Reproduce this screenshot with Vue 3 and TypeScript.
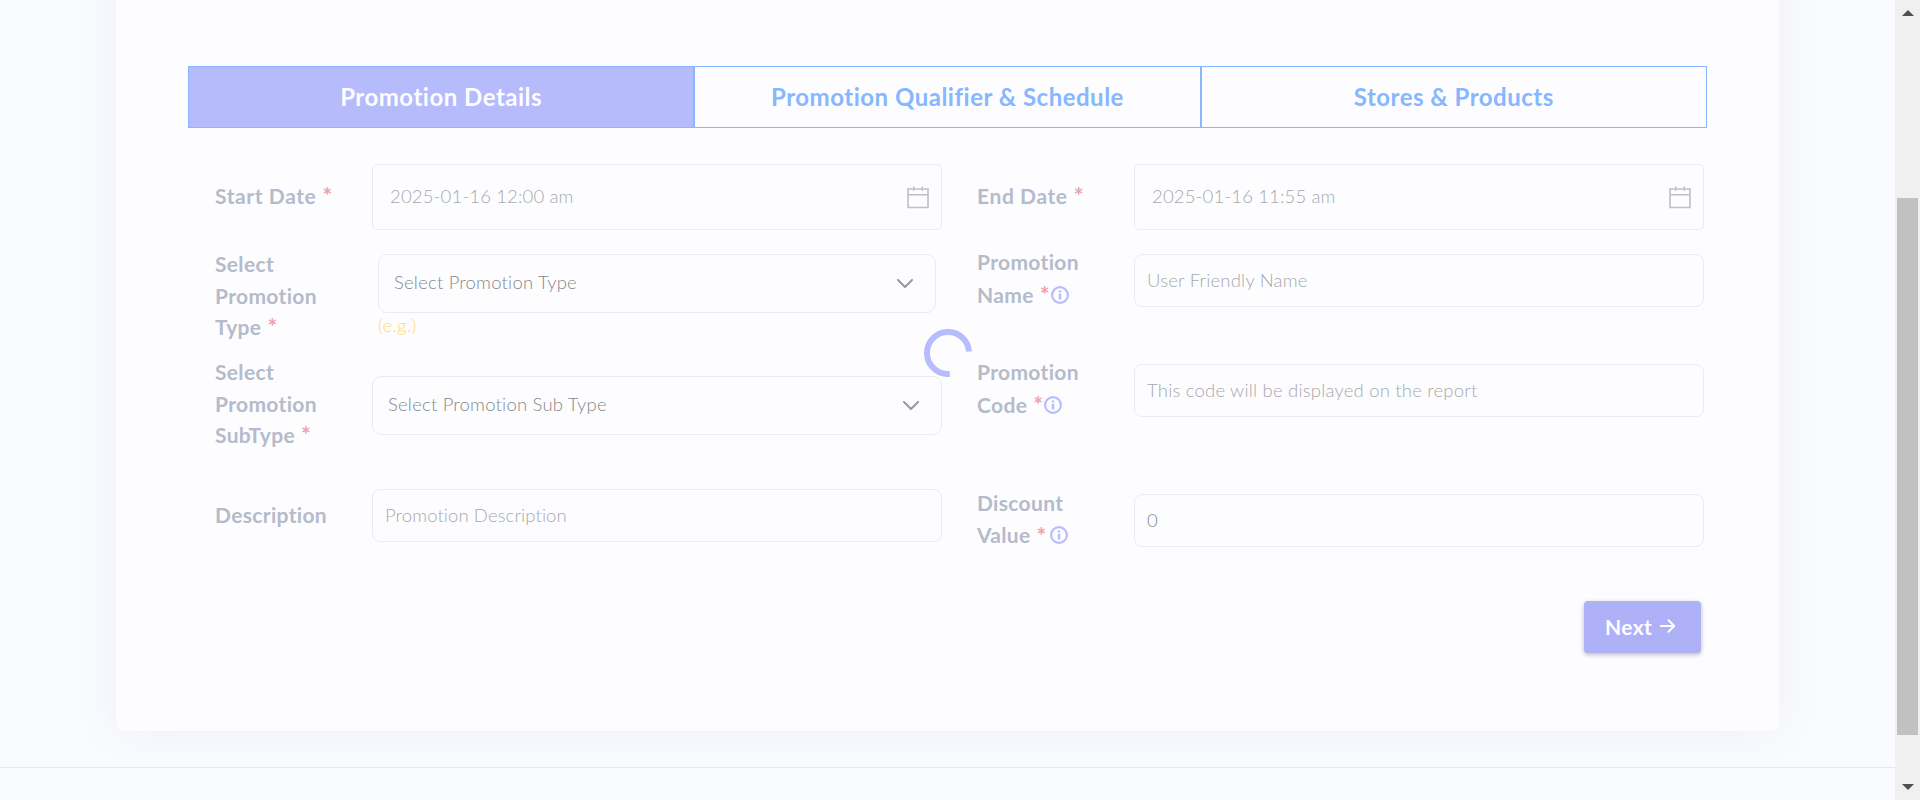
<script setup lang="ts">
interface Field {
  id: string
  kind: 'date' | 'select' | 'input'
  lines: string[]
  required?: boolean
  info?: boolean
  text: string
  hint?: string
  filled?: boolean
}

const tabs = [
  { id: 'details', label: 'Promotion Details', active: true },
  { id: 'qualifier', label: 'Promotion Qualifier & Schedule', active: false },
  { id: 'stores', label: 'Stores & Products', active: false },
]

const fields: Field[] = [
  { id: 'start', kind: 'date', lines: ['Start Date'], required: true, text: '2025-01-16 12:00 am' },
  { id: 'end', kind: 'date', lines: ['End Date'], required: true, text: '2025-01-16 11:55 am' },
  { id: 'type', kind: 'select', lines: ['Select', 'Promotion', 'Type'], required: true, text: 'Select Promotion Type', hint: '(e.g.)' },
  { id: 'name', kind: 'input', lines: ['Promotion', 'Name'], required: true, info: true, text: 'User Friendly Name' },
  { id: 'subtype', kind: 'select', lines: ['Select', 'Promotion', 'SubType'], required: true, text: 'Select Promotion Sub Type' },
  { id: 'code', kind: 'input', lines: ['Promotion', 'Code'], required: true, info: true, text: 'This code will be displayed on the report' },
  { id: 'description', kind: 'input', lines: ['Description'], text: 'Promotion Description' },
  { id: 'discount', kind: 'input', lines: ['Discount', 'Value'], required: true, info: true, text: '0', filled: true },
]
</script>

<template>
  <div class="window">
    <main class="page">
      <section class="card">
        <nav class="tabs">
          <div v-for="t in tabs" :key="t.id" class="tab" :class="[t.id, { active: t.active }]"><span>{{ t.label }}</span></div>
        </nav>
        <div class="form">
          <div v-for="f in fields" :key="f.id" class="field" :class="[f.id, f.kind]">
            <div class="label">
              <div v-for="(line, i) in f.lines" :key="line" class="line">
                <span>{{ line }}</span>
                <template v-if="i === f.lines.length - 1">
                  <span v-if="f.required" class="star">*</span>
                  <svg v-if="f.info" class="info" viewBox="0 0 18 18">
                    <circle cx="9" cy="9" r="7.900" fill="none" stroke="currentColor" stroke-width="2.200" />
                    <path d="M9 7.700v5.700M9 4.500v2.100" stroke="currentColor" stroke-width="2.500" />
                  </svg>
                </template>
              </div>
            </div>
            <div class="control">
              <div class="box" :class="{ filled: f.filled }">
                <span class="text">{{ f.text }}</span>
                <svg v-if="f.kind === 'date'" class="cal" viewBox="0 0 22 23">
                  <path d="M1 3h20v18.500H1zM1 8.700h20" fill="none" stroke="currentColor" stroke-width="1.600" />
                  <path d="M6.700 .6v4.400M15.300 .6v4.400" stroke="currentColor" stroke-width="1.400" />
                </svg>
                <svg v-if="f.kind === 'select'" class="chev" viewBox="0 0 16 10">
                  <path d="M1 1l7 7 7-7" fill="none" stroke="currentColor" stroke-width="2" stroke-linecap="round" stroke-linejoin="round" />
                </svg>
              </div>
              <div v-if="f.hint" class="hint">{{ f.hint }}</div>
            </div>
          </div>
        </div>
        <div class="actions">
          <div class="next">
            <span>Next</span>
            <svg viewBox="0 0 16 14"><path d="M1 7h13M8.500 1.300L14.200 7l-5.700 5.700" fill="none" stroke="currentColor" stroke-width="2.100" stroke-linecap="round" stroke-linejoin="round" /></svg>
          </div>
        </div>
      </section>
      <footer class="footer"></footer>
      <svg class="spinner" viewBox="0 0 48 48">
        <path d="M25.800 44.920A21 21 0 1 1 44.950 22.500" fill="none" stroke="#b7bcfd" stroke-width="6" />
      </svg>
    </main>
    <aside class="scrollbar">
      <svg class="arrow" viewBox="0 0 12 6"><path d="M6 0l6 6H0z" /></svg>
      <div class="thumb"></div>
      <svg class="arrow" viewBox="0 0 12 6"><path d="M0 0h12L6 6z" /></svg>
    </aside>
  </div>
</template>

<style>
body { margin: 0; overflow: hidden; }
</style>

<style scoped>
.window { display: flex; height: 800px; overflow: hidden; font-family: Lato, "Open Sans", sans-serif; box-sizing: border-box; }
.window * { box-sizing: border-box; }
.page { position: relative; width: 1895px; height: 800px; background: #fafbff; overflow: hidden; }
.card { margin: -40px 116px 0; height: 771px; padding: 106px 72px 0; background: #fdfdff; border-radius: 9px; box-shadow: 0 0 48px rgba(100, 115, 135, .08); }
.tabs { display: flex; height: 62px; }
.tab { flex: 1; display: flex; align-items: center; justify-content: center; border: 1px solid #86b7ff; color: #86b7ff; font-size: 24px; font-weight: 700; letter-spacing: .5px; padding-bottom: 2px; white-space: nowrap; }
.tab.active { background: #b6bbfb; color: #fdfdff; }
.form { display: grid; grid-template-columns: 727px 727px; column-gap: 35px; grid-template-rows: 82px 110px 126px 110px; margin: 36px 0 0 27px; }
.field { display: grid; grid-template-columns: 157px 570px; align-items: start; }
.label { color: #b4bbca; font-size: 21px; font-weight: 700; line-height: 31.500px; letter-spacing: .33px; }
.line { display: flex; align-items: center; white-space: nowrap; }
.star { color: #f0a0aa; margin-left: 6px; font-size: 23px; }
.info { width: 18px; height: 18px; color: #b7bcfd; margin-left: 1px; }
.box { display: flex; align-items: center; justify-content: space-between; height: 53px; border: 1px solid #ececef; border-radius: 8px; padding: 0 12px 2px; color: #a6a9ac; font-size: 18.500px; white-space: nowrap; }
.text { font-weight: 300; letter-spacing: .2px; }
.date .box { height: 66px; padding: 0 12px 0 17px; border-radius: 5px; }
.date .text { letter-spacing: .15px; padding-bottom: 2px; }
.date .label { padding-top: 16px; letter-spacing: .6px; }
.cal { width: 22px; height: 23px; color: #c0c0c3; }
.select .box { height: 59px; padding: 0 22px 0 15px; color: #85888b; border-radius: 9px; }
.select .text { padding-bottom: 3px; }
.chev { width: 16px; height: 10px; color: #97999c; margin-top: 1px; }
.filled { color: #85888b; }
.type .control { padding: 8px 6px 0; }
.type .label { padding-top: 2px; }
.hint { color: #ffd870; font-size: 18.500px; font-weight: 300; letter-spacing: .3px; line-height: 27px; margin-top: -1px; }
.name .control { padding-top: 8px; }
.name .label, .code .label { line-height: 33px; }
.name .label { margin-top: -1px; }
.code .label { margin-top: -1px; }
.subtype .control { padding-top: 20px; }
.code .control { padding-top: 8px; }
.description .control { padding-top: 7px; }
.description .label { padding-top: 17px; }
.description .box { padding-left: 12px; }
.description .text { letter-spacing: .1px; }
.discount .control { padding-top: 12px; }
.discount .label { padding-top: 5px; line-height: 32px; }
.discount .info { margin-left: 3px; }
.actions { display: flex; justify-content: flex-end; margin: 9px 6px 0 0; }
.next { display: flex; align-items: center; width: 117px; height: 52px; padding: 0 0 2px 21px; border-radius: 4px; background: #aeb0f8; color: #fdfdff; font-size: 21px; font-weight: 700; letter-spacing: .4px; box-shadow: 0 2px 4px rgba(0, 0, 0, .22), 0 0 6px rgba(0, 0, 0, .05); }
.next svg { width: 16px; height: 14px; margin-left: 8px; }
.footer { margin-top: 36px; border-top: 1px solid #e6e7ec; height: 33px; }
.spinner { position: absolute; left: 924px; top: 329px; width: 48px; height: 48px; }
.scrollbar { width: 25px; height: 800px; background: #f0f0f1; display: flex; flex-direction: column; align-items: center; padding: 10px 0; }
.arrow { width: 12px; height: 6px; fill: #505050; }
.thumb { width: 21px; height: 537px; margin: 182px 0 49px; background: #c1c1c1; }
</style>
